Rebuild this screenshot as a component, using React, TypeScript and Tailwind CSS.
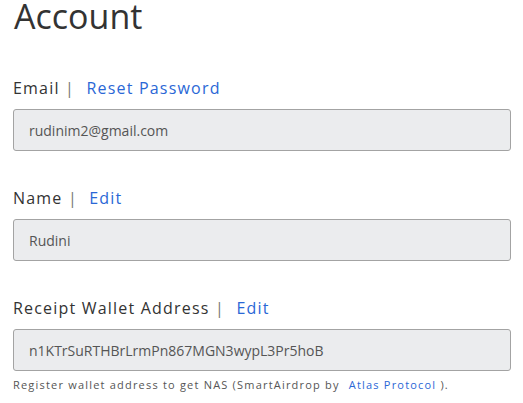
import React from "react";

const fields = [
  { label: "Email", action: "Reset Password", value: "rudinim2@gmail.com" },
  { label: "Name", action: "Edit", value: "Rudini" },
  { label: "Receipt Wallet Address", action: "Edit", value: "n1KTrSuRTHBrLrmPn867MGN3wypL3Pr5hoB" },
];

const App = () => {
  return (
    <div className="w-[523px] h-[403px] overflow-hidden bg-white pl-[13px] pr-[12px] font-['Open_Sans',sans-serif] text-[#333]">
      <h1 className="pl-[1px] text-[34px] leading-[32px] font-normal text-[#333]">Account</h1>

      <div className="mt-[44px] flex flex-col gap-[35px]">
        {fields.map((f) => (
          <div key={f.label}>
            <div className="text-[16px] leading-[24px] tracking-[1.2px] text-[#333]">
              {f.label} <span className="text-[#777]">|</span>{" "}
              <a href="#" className="ml-[6px] text-[#2a67d6]">{f.action}</a>
            </div>
            <div className="mt-[9px] h-[42px] flex items-center rounded-[3px] border border-[#a3a3a3] bg-[#ebecee] pl-[15px] text-[14px] text-[#555]">
              {f.value}
            </div>
          </div>
        ))}
      </div>

      <p className="mt-[6px] text-[11px] leading-[16px] tracking-[1.2px] text-[#555]">
        Register wallet address to get NAS (SmartAirdrop by{" "}
        <a href="#" className="ml-[5px] text-[#2a67d6]">Atlas Protocol</a> ).
      </p>
    </div>
  );
};

export default App;
